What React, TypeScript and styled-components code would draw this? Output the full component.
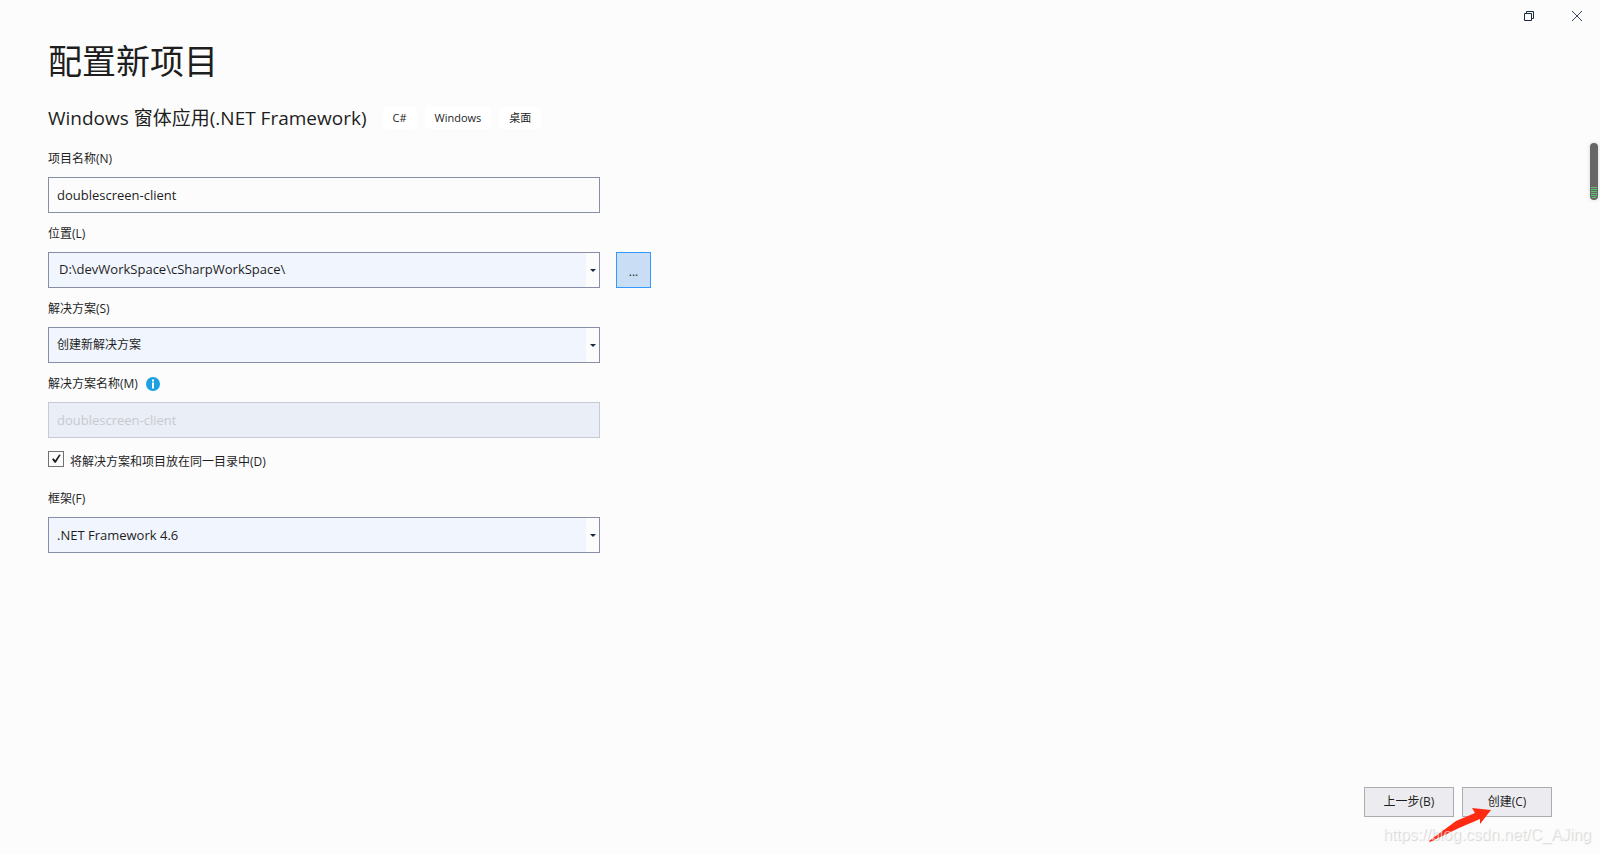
import React from "react";
import styled, { createGlobalStyle, css } from "styled-components";

const GlobalStyle = createGlobalStyle`
  * { box-sizing: border-box; }
  body {
    margin: 0;
    background: #fcfcfc;
    color: #1e1e1e;
    font: 12px/16px "Open Sans", "Noto Sans CJK SC", sans-serif;
  }
  button, input, select { font: inherit; color: inherit; margin: 0; }
`;

const Window = styled.div`
  position: relative;
  display: flex;
  flex-direction: column;
  min-height: 100vh;
  overflow: hidden;
`;

const TitleBar = styled.header`
  display: flex;
  justify-content: flex-end;
  height: 32px;
`;

const CaptionButton = styled.button`
  display: grid;
  place-items: center;
  width: 48px;
  height: 32px;
  padding: 0 0 0 2px;
  border: 0;
  background: transparent;
`;

const Main = styled.main`
  flex: 1;
  padding: 4px 48px 0;
`;

const Title = styled.h1`
  margin: 0;
  font-size: 34px;
  line-height: 50px;
  font-weight: 400;
`;

const Template = styled.div`
  display: flex;
  align-items: center;
  gap: 8px;
  margin-top: 16px;
  height: 32px;
`;

const TemplateName = styled.h2`
  margin: 0 8px 0 0;
  font-size: 19px;
  line-height: 32px;
  font-weight: 400;
`;

const Tag = styled.span`
  padding: 3px 10px;
  border-radius: 4px;
  background: #fff;
  font-size: 11px;
`;

const Form = styled.form`
  display: flex;
  flex-direction: column;
  align-items: flex-start;
  margin-top: 17px;
`;

const Field = styled.div`
  display: flex;
  flex-direction: column;
  width: 100%;
  margin-bottom: 13px;
`;

const Label = styled.label`
  line-height: 16px;
`;

const LabelRow = styled.div`
  display: flex;
  align-items: center;
  gap: 8px;
  margin-bottom: 10px;
`;

const ControlRow = styled.div`
  display: flex;
  gap: 16px;
`;

const control = css`
  width: 100%;
  height: 36px;
  padding: 0 24px 0 8px;
  border: 1px solid #868fa5;
  border-radius: 0;
  outline: 0;
  appearance: none;
  font-size: 13px;
`;

const TextBox = styled.input`
  ${control}
  max-width: 552px;
  background: #fcfcfc;
  &:disabled {
    background: #eaeef6;
    border-color: #c6cad6;
    color: #c8cad0;
  }
`;

const Combo = styled.div`
  position: relative;
  width: 100%;
  max-width: 552px;
`;

const comboFill = css`
  background: linear-gradient(to left, #fcfcfc 13px, #f1f5fd 13px);
`;

const ComboInput = styled.input`
  ${control}
  ${comboFill}
  padding: 0 24px 2px 10px;
`;

const Select = styled.select<{ $cjk?: boolean }>`
  ${control}
  ${comboFill}
  font-size: ${(p) => (p.$cjk ? 12 : 13)}px;
`;

const Caret = styled.svg`
  position: absolute;
  right: 4px;
  top: 17px;
  pointer-events: none;
`;

const BrowseButton = styled.button`
  flex: none;
  width: 35px;
  height: 36px;
  padding: 4px 0 0;
  border: 1px solid #3399ff;
  background: #c9def5;
`;

const CheckRow = styled.div`
  display: flex;
  gap: 6px;
  height: 26px;
  margin-bottom: 14px;
`;

const CheckBox = styled.span`
  position: relative;
  width: 16px;
  height: 16px;
  input {
    display: block;
    width: 16px;
    height: 16px;
    appearance: none;
    border: 1px solid #717171;
    background: #fcfcfc;
  }
  svg {
    position: absolute;
    inset: 0;
    visibility: hidden;
    pointer-events: none;
  }
  input:checked + svg { visibility: visible; }
`;

const CheckLabel = styled.label`
  padding-top: 3px;
`;

const Footer = styled.footer`
  display: flex;
  justify-content: flex-end;
  gap: 8px;
  padding: 0 48px 37px;
`;

const DialogButton = styled.button`
  width: 90px;
  height: 30px;
  padding: 0;
  border: 1px solid #acacac;
  background: #ececf0;
`;

const ScrollHandle = styled.div`
  position: absolute;
  right: 2px;
  top: 143px;
  display: flex;
  flex-direction: column;
  align-items: center;
  justify-content: flex-end;
  gap: 1px;
  width: 8px;
  height: 57px;
  padding-bottom: 2px;
  border-radius: 4px;
  background: #666;
  box-shadow: 0 0 4px rgba(0, 0, 0, 0.15);
`;

const Level = styled.i`
  width: 6px;
  height: 1px;
  background: #5cc470;
  &:last-child { width: 4px; }
`;

const Pointer = styled.svg`
  position: absolute;
  right: 109px;
  bottom: 12px;
  pointer-events: none;
`;

const Watermark = styled.div`
  position: absolute;
  right: 9px;
  bottom: 9px;
  font: 16px/20px "Liberation Sans", sans-serif;
  color: rgba(255, 255, 255, 0.6);
  text-shadow: 1px 1px 1px rgba(0, 0, 0, 0.16);
  pointer-events: none;
`;

const ComboCaret = () => (
  <Caret width="6" height="3" viewBox="0 0 6 3" aria-hidden="true">
    <path d="M0 0h6L3 3z" fill="#1b293e" />
  </Caret>
);

export default function App() {
  return (
    <Window>
      <GlobalStyle />
      <TitleBar>
        <CaptionButton aria-label="还原">
          <svg width="10" height="10" viewBox="0 0 10 10" fill="none" stroke="#1b293e">
            <path d="M.5 2.5h7v7h-7zM2.5 2.5v-2h7v7h-2" />
          </svg>
        </CaptionButton>
        <CaptionButton aria-label="关闭">
          <svg width="10" height="10" viewBox="0 0 10 10" stroke="#3b465c">
            <path d="M0 0l10 10M10 0L0 10" />
          </svg>
        </CaptionButton>
      </TitleBar>

      <Main>
        <Title>配置新项目</Title>
        <Template>
          <TemplateName>Windows 窗体应用(.NET Framework)</TemplateName>
          <Tag>C#</Tag>
          <Tag>Windows</Tag>
          <Tag>桌面</Tag>
        </Template>

        <Form id="project" onSubmit={(e) => e.preventDefault()}>
          <Field>
            <LabelRow>
              <Label htmlFor="name">项目名称(N)</Label>
            </LabelRow>
            <TextBox id="name" defaultValue="doublescreen-client" spellCheck={false} />
          </Field>

          <Field>
            <LabelRow>
              <Label htmlFor="location">位置(L)</Label>
            </LabelRow>
            <ControlRow>
              <Combo>
                <ComboInput
                  id="location"
                  role="combobox"
                  aria-expanded={false}
                  defaultValue={"D:\\devWorkSpace\\cSharpWorkSpace\\"}
                  spellCheck={false}
                />
                <ComboCaret />
              </Combo>
              <BrowseButton type="button">...</BrowseButton>
            </ControlRow>
          </Field>

          <Field>
            <LabelRow>
              <Label htmlFor="solution">解决方案(S)</Label>
            </LabelRow>
            <Combo>
              <Select id="solution" $cjk>
                <option>创建新解决方案</option>
              </Select>
              <ComboCaret />
            </Combo>
          </Field>

          <Field>
            <LabelRow>
              <Label htmlFor="solution-name">解决方案名称(M)</Label>
              <svg width="14" height="14" viewBox="0 0 14 14" aria-hidden="true">
                <circle cx="7" cy="7" r="7" fill="#1ba1e2" />
                <path d="M6 2.5h2v2H6zM6 5.5h2v6H6z" fill="#fff" />
              </svg>
            </LabelRow>
            <TextBox id="solution-name" defaultValue="doublescreen-client" disabled />
          </Field>

          <CheckRow>
            <CheckBox>
              <input id="same-dir" type="checkbox" defaultChecked />
              <svg width="16" height="16" viewBox="0 0 16 16" aria-hidden="true">
                <path d="M4 8.2l1.6-1 1.6 2L11 3.8h1.8L7.8 11.8H6.6z" fill="#1e1e1e" />
              </svg>
            </CheckBox>
            <CheckLabel htmlFor="same-dir">将解决方案和项目放在同一目录中(D)</CheckLabel>
          </CheckRow>

          <Field>
            <LabelRow>
              <Label htmlFor="framework">框架(F)</Label>
            </LabelRow>
            <Combo>
              <Select id="framework">
                <option>.NET Framework 4.6</option>
              </Select>
              <ComboCaret />
            </Combo>
          </Field>
        </Form>
      </Main>

      <Footer>
        <DialogButton type="button">上一步(B)</DialogButton>
        <DialogButton type="submit" form="project">创建(C)</DialogButton>
      </Footer>

      <ScrollHandle>
        <Level /><Level /><Level /><Level /><Level /><Level />
      </ScrollHandle>
      <Pointer width="62" height="34" viewBox="0 0 62 34" aria-hidden="true">
        <path d="M1 34L0 33 27 13 46 5 43 0 62 2 51 16 51 11 30 20z" fill="#ff2a12" />
      </Pointer>
      <Watermark>https://blog.csdn.net/C_AJing</Watermark>
    </Window>
  );
}
